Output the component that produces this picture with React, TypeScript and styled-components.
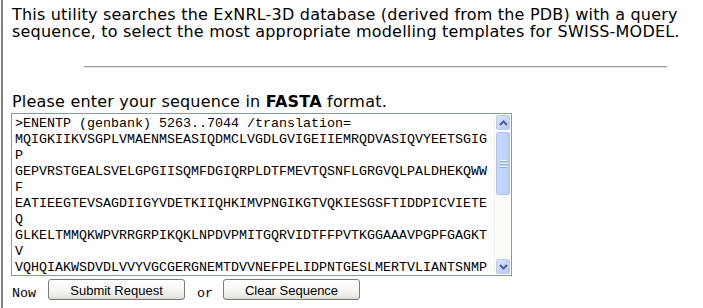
import styled, { createGlobalStyle } from "styled-components";

const GlobalStyle = createGlobalStyle`
  html, body {
    margin: 0;
    padding: 0;
    background: #ffffff;
    overflow: hidden;
  }
`;

const Page = styled.main`
  margin-left: 1px;
  min-height: 308px;
  border-left: 2px solid #808080;
  padding: 6px 0 0 9px;
  box-sizing: border-box;
  font-family: "DejaVu Sans", Verdana, sans-serif;
  font-size: 16px;
  letter-spacing: 0.2px;
  line-height: 17px;
  color: #000000;
`;

const Intro = styled.p`
  margin: 0;
  white-space: nowrap;
`;

const Rule = styled.hr`
  width: 583px;
  margin: 26px 0 0 72px;
  height: 0;
  border: none;
  border-top: 1px solid #9d9d9d;
  border-bottom: 1px solid #e4e4e4;
`;

const Prompt = styled.p`
  margin: 25px 0 0;
`;

const SequenceBox = styled.div`
  display: flex;
  width: 501px;
  height: 163px;
  margin: 3px 0 0 -1px;
  border: 1px solid #7f9db9;
  box-sizing: border-box;
  background: #ffffff;
  letter-spacing: 0;
`;

const SequenceText = styled.div`
  flex: 1;
  min-width: 0;
  padding: 2px 2px 0 3px;
  overflow: hidden;
  font-family: "Liberation Mono", "Courier New", monospace;
  font-size: 13.333px;
  line-height: 16px;
  white-space: pre-wrap;
  word-break: break-all;
`;

const Scrollbar = styled.div`
  display: flex;
  flex-direction: column;
  width: 17px;
  background: #fcfcf7;
  border-left: 1px solid #f2f1ea;
  box-sizing: border-box;
`;

const ScrollButton = styled.div`
  display: flex;
  align-items: center;
  justify-content: center;
  height: 17px;
  border: 1px solid #ffffff;
  border-radius: 3px;
  background: linear-gradient(135deg, #dbe6fe 0%, #c5d5fc 55%, #b5c9f7 100%);
  box-shadow: inset 0 0 0 1px #b9cbf3;
  box-sizing: border-box;
`;

const Track = styled.div`
  flex: 1;
  display: flex;
  flex-direction: column;
`;

const Thumb = styled.div`
  display: flex;
  flex-direction: column;
  align-items: center;
  justify-content: center;
  gap: 1px;
  height: 65px;
  border: 1px solid #ffffff;
  border-radius: 3px;
  background: linear-gradient(90deg, #c9d8fd 0%, #c2d3fc 60%, #b4c8f7 100%);
  box-shadow: inset 0 0 0 1px #aec3f0;
  box-sizing: border-box;
`;

const Grip = styled.span`
  display: block;
  width: 7px;
  height: 1px;
  background: #eef3fe;
  box-shadow: 0 1px 0 #8fa9e0;
  margin-bottom: 1px;
`;

const Actions = styled.div`
  display: flex;
  align-items: flex-start;
  margin-top: 3px;
  letter-spacing: 0;
`;

const Word = styled.span`
  padding-top: 7px;
  font-family: "Liberation Mono", "Courier New", monospace;
  font-size: 13.333px;
  line-height: 16px;
`;

const Button = styled.button<{ $gap: number }>`
  width: 137px;
  height: 21px;
  margin: 0 ${({ $gap }) => $gap}px 0 ${({ $gap }) => $gap}px;
  padding: 2px 0 0;
  border: 1px solid #7a7a7a;
  border-radius: 3px;
  background: linear-gradient(180deg, #ffffff 0%, #f6f6f2 55%, #ebeae4 85%, #d6d5ce 100%);
  font-family: "Liberation Sans", Arial, sans-serif;
  font-size: 13px;
  line-height: 15px;
  color: #000000;
  box-sizing: border-box;
`;

const Chevron = ({ up }: { up?: boolean }) => (
  <svg width="9" height="6" viewBox="0 0 9 6" aria-hidden="true">
    <path
      d={up ? "M1 5 L4.5 1.5 L8 5" : "M1 1 L4.5 4.5 L8 1"}
      fill="none"
      stroke="#4d6185"
      strokeWidth="2"
    />
  </svg>
);

// only the part of the sequence that shows in the box
const sequence = `>ENENTP (genbank) 5263..7044 /translation=
MQIGKIIKVSGPLVMAENMSEASIQDMCLVGDLGVIGEIIEMRQDVASIQVYEETSGIGP
GEPVRSTGEALSVELGPGIISQMFDGIQRPLDTFMEVTQSNFLGRGVQLPALDHEKQWWF
EATIEEGTEVSAGDIIGYVDETKIIQHKIMVPNGIKGTVQKIESGSFTIDDPICVIETEQ
GLKELTMMQKWPVRRGRPIKQKLNPDVPMITGQRVIDTFFPVTKGGAAAVPGPFGAGKTV
VQHQIAKWSDVDLVVYVGCGERGNEMTDVVNEFPELIDPNTGESLMERTVLIANTSNMP`;

export default function App() {
  return (
    <>
      <GlobalStyle />
      <Page>
        <Intro>
          This utility searches the ExNRL-3D database (derived from the PDB) with a query
          <br />
          sequence, to select the most appropriate modelling templates for SWISS-MODEL.
        </Intro>
        <Rule />
        <Prompt>
          Please enter your sequence in <b>FASTA</b> format.
        </Prompt>
        <SequenceBox>
          <SequenceText>{sequence}</SequenceText>
          <Scrollbar>
            <ScrollButton>
              <Chevron up />
            </ScrollButton>
            <Track>
              <Thumb>
                <Grip />
                <Grip />
                <Grip />
              </Thumb>
            </Track>
            <ScrollButton>
              <Chevron />
            </ScrollButton>
          </Scrollbar>
        </SequenceBox>
        <Actions>
          <Word>Now</Word>
          <Button type="button" $gap={12}>
            Submit Request
          </Button>
          <Word>or</Word>
          <Button type="button" $gap={10}>
            Clear Sequence
          </Button>
        </Actions>
      </Page>
    </>
  );
}
